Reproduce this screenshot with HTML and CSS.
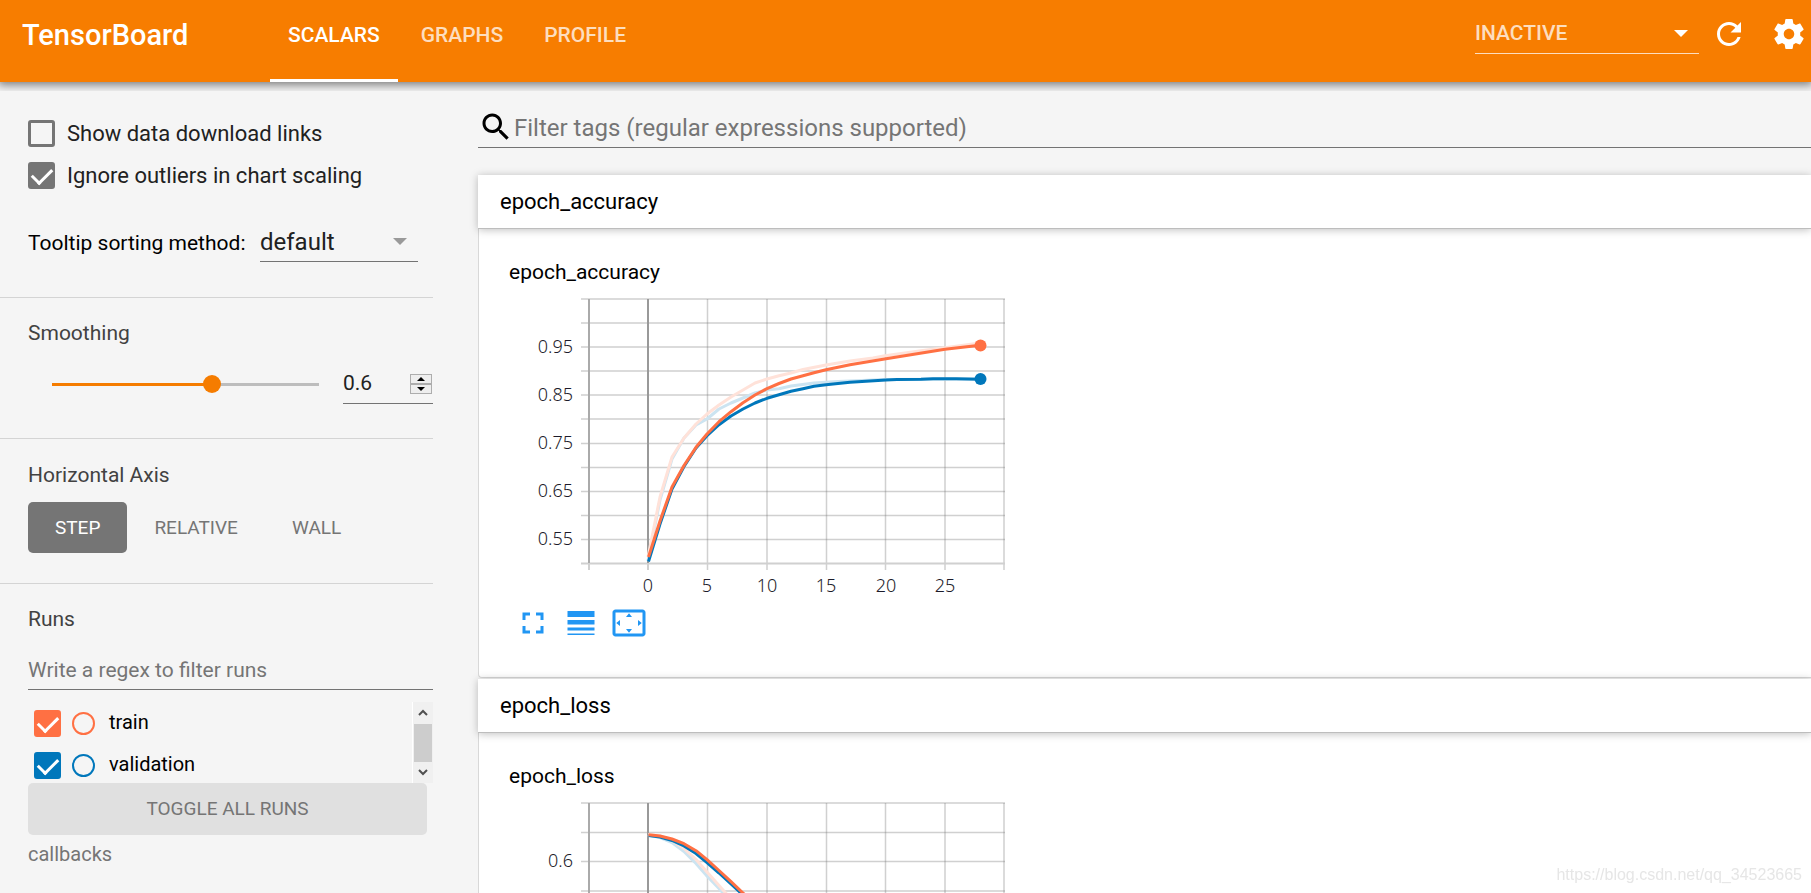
FILE: index.html
```html
<!DOCTYPE html>
<html lang="en">
<head>
<meta charset="utf-8">
<title>TensorBoard</title>
<link rel="stylesheet" href="styles.css">
</head>
<body>
<header class="toolbar">
  <h1 class="brand">TensorBoard</h1>
  <nav class="tabs">
    <a class="tab active" href="#scalars">SCALARS</a>
    <a class="tab" href="#graphs">GRAPHS</a>
    <a class="tab" href="#profile">PROFILE</a>
  </nav>
  <div class="drop inactive">
    <select aria-label="Inactive plugins"><option>INACTIVE</option></select>
    <svg class="arrow" viewBox="0 0 14 7"><path d="M0 0h14L7 7z"/></svg>
  </div>
  <button class="icon-btn" aria-label="Reload"><svg viewBox="0 0 24 24"><path d="M17.65 6.35C16.2 4.9 14.21 4 12 4c-4.42 0-7.99 3.58-7.99 8s3.57 8 7.99 8c3.73 0 6.84-2.55 7.73-6h-2.08c-.82 2.33-3.04 4-5.65 4-3.31 0-6-2.69-6-6s2.69-6 6-6c1.66 0 3.14.69 4.22 1.78L13 11h7V4l-2.35 2.35z"/></svg></button>
  <button class="icon-btn settings" aria-label="Settings"><svg viewBox="0 0 24 24"><path d="M19.43 12.98c.04-.32.07-.64.07-.98s-.03-.66-.07-.98l2.11-1.65c.19-.15.24-.42.12-.64l-2-3.46c-.12-.22-.39-.3-.61-.22l-2.49 1c-.52-.4-1.08-.73-1.69-.98l-.38-2.65C14.46 2.18 14.25 2 14 2h-4c-.25 0-.46.18-.49.42l-.38 2.65c-.61.25-1.17.59-1.69.98l-2.49-1c-.23-.09-.49 0-.61.22l-2 3.46c-.13.22-.07.49.12.64l2.11 1.65c-.04.32-.07.65-.07.98s.03.66.07.98l-2.11 1.65c-.19.15-.24.42-.12.64l2 3.46c.12.22.39.3.61.22l2.49-1c.52.4 1.08.73 1.69.98l.38 2.65c.03.24.24.42.49.42h4c.25 0 .46-.18.49-.42l.38-2.65c.61-.25 1.17-.59 1.69-.98l2.49 1c.23.09.49 0 .61-.22l2-3.46c.12-.22.07-.49-.12-.64l-2.11-1.65zM12 15.5c-1.93 0-3.5-1.57-3.5-3.5s1.57-3.5 3.5-3.5 3.5 1.57 3.5 3.5-1.57 3.5-3.5 3.5z"/></svg></button>
</header>
<div class="content">
  <aside class="sidebar">
    <section class="options">
      <label class="check-row"><input class="check" type="checkbox">Show data download links</label>
      <label class="check-row"><input class="check" type="checkbox" checked>Ignore outliers in chart scaling</label>
      <div class="sort-row">
        <label for="sort">Tooltip sorting method:</label>
        <div class="drop sort">
          <select id="sort"><option>default</option></select>
          <svg class="arrow" viewBox="0 0 14 7"><path d="M0 0h14L7 7z"/></svg>
        </div>
      </div>
    </section>
    <section class="smoothing">
      <h2>Smoothing</h2>
      <div class="smooth-row">
        <input class="slider" type="range" min="0" max="1" step="0.1" value="0.6" aria-label="Smoothing">
        <div class="number">
          <input type="number" step="0.1" value="0.6" aria-label="Smoothing value">
          <div class="spin">
            <button aria-label="Increase"><svg viewBox="0 0 8 4"><path d="M0 4h8L4 0z"/></svg></button>
            <button aria-label="Decrease"><svg viewBox="0 0 8 4"><path d="M0 0h8L4 4z"/></svg></button>
          </div>
        </div>
      </div>
    </section>
    <section class="axis">
      <h2>Horizontal Axis</h2>
      <div class="modes">
        <button class="mode selected">STEP</button>
        <button class="mode">RELATIVE</button>
        <button class="mode">WALL</button>
      </div>
    </section>
    <section class="runs">
      <h2>Runs</h2>
      <input class="regex" type="text" placeholder="Write a regex to filter runs" aria-label="Filter runs">
      <div class="run-box">
        <div class="run-list">
          <div class="run train"><input class="check" id="train" type="checkbox" checked><button class="dot" aria-label="Only train"></button><label for="train">train</label></div>
          <div class="run validation"><input class="check" id="validation" type="checkbox" checked><button class="dot" aria-label="Only validation"></button><label for="validation">validation</label></div>
        </div>
        <div class="scrollbar">
          <svg viewBox="0 0 10 7"><path d="M1 6l4-4 4 4"/></svg>
          <div class="thumb"></div>
          <svg viewBox="0 0 10 7"><path d="M1 1l4 4 4-4"/></svg>
        </div>
      </div>
      <button class="toggle">TOGGLE ALL RUNS</button>
      <p class="logdir">callbacks</p>
    </section>
  </aside>
  <main class="main">
    <div class="search">
      <svg viewBox="0 0 24 24"><path d="M15.5 14h-.79l-.28-.27C15.41 12.59 16 11.11 16 9.5 16 5.91 13.09 3 9.5 3S3 5.91 3 9.5 5.91 16 9.5 16c1.61 0 3.09-.59 4.23-1.57l.27.28v.79l5 4.99L20.49 19l-4.99-5zm-6 0C7.01 14 5 11.99 5 9.5S7.01 5 9.5 5 14 7.01 14 9.5 11.99 14 9.5 14z"/></svg>
      <input type="text" placeholder="Filter tags (regular expressions supported)" aria-label="Filter tags">
    </div>
    <section class="card">
      <button class="card-head">epoch_accuracy</button>
      <div class="card-body">
        <h3>epoch_accuracy</h3>
        <svg class="chart" viewBox="509 290 500 306">
          <path class="grid" d="M581 299H1005M581 323H1005M581 347H1005M581 371H1005M581 395H1005M581 419H1005M581 443.500H1005M581 467.500H1005M581 491.500H1005M581 515.500H1005M581 539.500H1005"/>
          <path class="grid" d="M707.500 299V570M767 299V570M826.500 299V570M885.500 299V570M945 299V570M1004 299V570"/>
          <path class="axis-line light" d="M581 563.500H1005M589 563V570M648 563V570"/>
          <path class="axis-line" d="M589 299V563"/>
          <path class="axis-line zero" d="M648 299V563"/>
          <g class="ticks y"><text x="573" y="353">0.95</text><text x="573" y="401">0.85</text><text x="573" y="449">0.75</text><text x="573" y="497">0.65</text><text x="573" y="545">0.55</text></g>
          <g class="ticks x"><text x="648" y="592">0</text><text x="707" y="592">5</text><text x="767" y="592">10</text><text x="826" y="592">15</text><text x="886" y="592">20</text><text x="945" y="592">25</text></g>
          <path class="line blue raw" d="M648 561L660 500 672 459 684 438 696 425 707 419 719 409 731 403 743 398 755 393 767 390 779 388.700 791 386 814 383 838 381.500 885 379.500 980 379"/>
          <path class="line orange raw" d="M648 557L660 497 672 457 684 438 696 424 707 414 719 405 731 397 743 390 755 383 767 379 779 375.700 791 373 803 369.500 826 365 850 361 873 358 885 355.700 921 350.700 945 347.700 980 343"/>
          <path class="line blue" d="M648.500 561.500L660 524 672 489 684 466.500 696 448 707 435.700 719 424.700 731 416 743 409 755 403 767 398.300 779 394.700 791 391.300 803 388.700 814 386.300 826 384.700 850 382.300 886 380 897 379.500 921 379.300 933 378.800 956 378.800 980 379.300"/>
          <path class="line orange" d="M648.500 557L660 521 672 487 684 465.500 696 447.300 707 434 719 421.700 731 411.700 743 402.700 755 395 767 388.600 779 383.500 791 379 803 375.700 814 372.700 826 369.700 850 364.700 886 358.700 945 349.300 980 345.300"/>
          <circle class="end orange" cx="980.500" cy="345.500" r="6"/><circle class="end blue" cx="980.500" cy="379" r="6"/>
        </svg>
        <div class="chart-actions">
          <button aria-label="Fullscreen"><svg viewBox="0 0 24 24"><path d="M7 14H5v5h5v-2H7v-3zm-2-4h2V7h3V5H5v5zm12 7h-3v2h5v-5h-2v3zM14 5v2h3v3h2V5h-5z"/></svg></button>
          <button aria-label="Toggle log scale"><svg viewBox="0 0 24 24"><path d="M3 17h18v-2H3v2zm0 3h18v-1H3v1zm0-7h18v-3H3v3zm0-9v4h18V4H3z"/></svg></button>
          <button aria-label="Fit domain"><svg viewBox="0 0 24 24"><path d="M12.010 5.500L10 8h4l-1.990-2.500zM18 10v4l2.500-1.990L18 10zM6 10l-2.500 2.010L6 14v-4zm8 6h-4l2.010 2.500L14 16zm7-13H3c-1.100 0-2 .9-2 2v14c0 1.100.9 2 2 2h18c1.100 0 2-.9 2-2V5c0-1.100-.9-2-2-2zm0 16.010H3V4.990h18v14.020z"/></svg></button>
        </div>
      </div>
    </section>
    <section class="card">
      <button class="card-head">epoch_loss</button>
      <div class="card-body">
        <h3>epoch_loss</h3>
        <svg class="chart" viewBox="509 794 500 306">
          <path class="grid" d="M581 803H1005M581 832.500H1005M581 861.500H1005M581 891H1005"/>
          <path class="grid" d="M707.500 803V1070M767 803V1070M826.500 803V1070M885.500 803V1070M945 803V1070M1004 803V1070"/>
          <path class="axis-line" d="M589 803V1070"/>
          <path class="axis-line zero" d="M648 803V1070"/>
          <g class="ticks y"><text x="573" y="867">0.6</text></g>
          <path class="line blue raw" d="M648 835L660 837.500 672 842.500 684 851.500 696 863.500 707 876 719 888.500 731 902"/>
          <path class="line orange raw" d="M648 834.500L660 836 672 840.500 684 848.500 696 859.500 707 872 719 885.500 731 899"/>
          <path class="line blue" d="M648.500 835.500L660 837 672 840.500 684 846 696 853.500 707 862.500 719 873 731 884 743 895 755 906"/>
          <path class="line orange" d="M648.500 834.700L660 836 672 839 684 843.700 696 850.700 707 859.700 719 870.500 731 881.700 743 893 755 904"/>
        </svg>
      </div>
    </section>
  </main>
</div>
<div class="watermark">https://blog.csdn.net/qq_34523665</div>
</body>
</html>
```
FILE: styles.css
```css
* { box-sizing: border-box; }
body { margin: 0; height: 100vh; overflow: hidden; display: flex; flex-direction: column; background: #f5f5f5; color: #000; font: 21px/24px Roboto, sans-serif; }
h1, h2, h3, p { margin: 0; font-size: 21px; font-weight: 400; }
button, input, select { font: inherit; color: inherit; margin: 0; padding: 0; border: 0; background: none; border-radius: 0; outline: 0; }
select { appearance: none; width: 100%; height: 100%; }
svg { display: block; fill: currentColor; }
input::placeholder { color: #757575; opacity: 1; }

.toolbar { flex: none; height: 82px; padding: 0 4px 0 22px; display: flex; background: #f77d00; color: #fff; box-shadow: 0 1px 9px 2px rgba(0, 0, 0, .5); clip-path: inset(0 0 -9px 0); position: relative; z-index: 1; }
.brand { width: 248px; font-size: 29px; font-weight: 500; line-height: 70px; }
.tabs { display: flex; gap: 5px; margin-right: auto; }
.tab { padding: 0 18px; line-height: 70px; font-weight: 500; color: rgba(255, 255, 255, .75); text-decoration: none; border-bottom: 3px solid transparent; }
.tab.active { color: #fff; border-color: #fff; }
.drop { position: relative; border-bottom: 1px solid #737373; }
.arrow { position: absolute; right: 11px; top: 11px; width: 14px; height: 7px; color: #999; pointer-events: none; }
.inactive { width: 224px; height: 42px; margin: 12px 12px 0 0; border-color: rgba(255, 255, 255, .75); color: rgba(255, 255, 255, .75); font-weight: 500; }
.inactive .arrow { top: 18px; color: #fff; }
.icon-btn { width: 36px; height: 36px; margin-top: 16px; }
.settings { margin-left: 24px; }

.content { flex: 1; min-height: 0; display: flex; overflow: hidden; }
.sidebar { flex: none; width: 433px; margin-right: 45px; }
.sidebar section { padding: 23px 0 34px 28px; border-bottom: 1px solid #d4d4d4; }
.sidebar h2 { color: #424242; }
.sidebar .options { padding-top: 38px; padding-bottom: 35px; }
.check-row { display: flex; align-items: center; gap: 12px; height: 27px; margin-bottom: 15px; font-size: 22px; color: #212121; }
.check { appearance: none; flex: none; width: 27px; height: 27px; border: 3px solid #757575; border-radius: 3px; display: flex; justify-content: center; }
.check:checked { background: #757575; }
.check:checked::after { content: ""; width: 9px; height: 17px; border: solid #fff; border-width: 0 3px 3px 0; transform: rotate(45deg); margin-top: -1px; }
.sort-row { display: flex; justify-content: space-between; align-items: flex-end; margin: 38px 15px 0 0; }
.sort-row label { line-height: 37px; margin-top: -2px; }
.sort { width: 158px; height: 35px; font-size: 24px; color: #212121; }
.sort select { padding-bottom: 4px; }
.smooth-row { display: flex; align-items: center; justify-content: space-between; margin: 20px 0 0 15px; }
.slider { appearance: none; width: 285px; height: 18px; }
.slider::-webkit-slider-runnable-track { height: 3px; background: linear-gradient(to right, transparent 9px, #f57c00 9px, #f57c00 60%, #bdbdbd 60%, #bdbdbd calc(100% - 9px), transparent calc(100% - 9px)); }
.slider::-webkit-slider-thumb { appearance: none; width: 18px; height: 18px; margin-top: -8px; border-radius: 50%; background: #f57c00; }
.number { width: 90px; height: 39px; display: flex; align-items: center; border-bottom: 1px solid #737373; color: #212121; }
.number input { flex: 1; min-width: 0; padding-bottom: 2px; appearance: textfield; }
.number input::-webkit-inner-spin-button { appearance: none; margin: 0; }
.spin { width: 22px; margin-right: 1px; color: #000; }
.spin button { width: 22px; height: 10px; display: flex; align-items: center; justify-content: center; border: 1px solid #adadad; background: #eee; }
.spin svg { width: 8px; height: 4px; }
.sidebar .axis { padding-top: 24px; padding-bottom: 30px; }
.modes { display: flex; margin-top: 15px; font-size: 19px; }
.mode { height: 51px; padding: 0 27px; border-radius: 5px; color: #757575; }
.mode.selected { background: #757575; color: #fff; }
.sidebar .runs { border: 0; padding-bottom: 0; }
.regex { display: block; width: 100%; height: 40px; margin-top: 19px; border-bottom: 1px solid #737373; }
.run-box { display: flex; height: 81px; margin-top: 12px; overflow: hidden; }
.run-list { flex: 1; padding-left: 6px; font-size: 20px; }
.run { display: flex; align-items: center; height: 42px; }
.train { color: #ff7043; }
.validation { color: #0077bb; }
.run .check, .run .check:checked { border-color: currentColor; background: currentColor; }
.dot { width: 23px; height: 23px; margin: 0 14px 0 11px; border: 2px solid currentColor; border-radius: 50%; }
.run label { padding-bottom: 3px; color: #000; }
.scrollbar { width: 21px; padding: 7px 1px; display: flex; flex-direction: column; align-items: center; justify-content: space-between; background: #f0f0f0; border-left: 1px solid #fff; }
.scrollbar svg { width: 10px; height: 7px; fill: none; stroke: #505050; stroke-width: 2; }
.thumb { width: 18px; height: 38px; background: #cdcdcd; }
.toggle { display: block; width: 399px; height: 52px; border-radius: 5px; background: #e0e0e0; color: #757575; font-size: 19px; }
.logdir { margin-top: 7px; color: #757575; font-size: 20px; }

.main { flex: 1; min-width: 0; }
.search { display: flex; align-items: center; height: 42px; margin: 24px 0 27px; border-bottom: 1px solid #737373; font-size: 24px; }
.search svg { width: 36px; height: 36px; }
.search input { flex: 1; height: 36px; padding-top: 2px; }
.card { margin-bottom: 1px; }
.card-head { display: block; position: relative; width: 100%; height: 54px; padding-left: 22px; text-align: left; font-size: 22px; background: #fff; border-bottom: 1px solid #bdbdbd; box-shadow: 0 1px 8px rgba(0, 0, 0, .25); }
.card-body { padding: 31px 0 36px 30px; background: #fff; border: 1px solid #d8d8d8; border-width: 0 0 1px 1px; border-radius: 0 0 0 4px; }
.chart { width: 500px; height: 306px; margin-top: 6px; }
.grid { stroke: rgba(120, 120, 120, .35); stroke-width: 1.5; fill: none; }
.axis-line { stroke: #aaa; stroke-width: 2; }
.axis-line.zero { stroke: #999; }
.axis-line.light { stroke: #d0d0d0; }
.ticks { font: 300 18px "Noto Sans", "Open Sans", sans-serif; fill: #1c1b2a; }
.ticks.y { text-anchor: end; }
.ticks.x { text-anchor: middle; }
.line { fill: none; stroke-width: 3; stroke-linejoin: round; }
.line.orange { stroke: #ff7043; }
.line.blue { stroke: #0077bb; }
.line.orange.raw { stroke: #ffe2d9; }
.line.blue.raw { stroke: #cce4f1; }
.end.orange { fill: #ff7043; }
.end.blue { fill: #0077bb; }
.chart-actions { display: flex; gap: 12px; margin: 9px 0 0 6px; color: #2196f3; }
.chart-actions button { width: 36px; height: 36px; }
.watermark { position: fixed; right: 9px; bottom: 7px; z-index: 2; font: 16px/22px "Liberation Sans", Arial, sans-serif; color: #e6e6e6; pointer-events: none; }
```
